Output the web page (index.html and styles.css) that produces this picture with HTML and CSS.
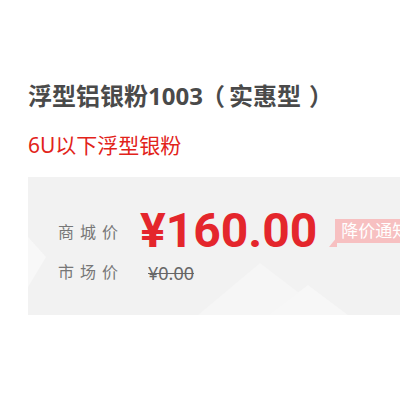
FILE: index.html
```html
<!DOCTYPE html>
<html lang="zh-CN">
  <head>
    <meta charset="UTF-8" />
    <meta name="viewport" content="width=device-width, initial-scale=1.0" />
    <title>浮型铝银粉1003（实惠型）</title>
    <link rel="stylesheet" href="styles.css">
  </head>
  <body>
    <div class="product">
      <h1 class="name">浮型铝银粉1003<span class="paren-l">（</span>实惠型<span class="paren-r">）</span></h1>
      <p class="sub">6U以下浮型银粉</p>

      <!-- 价格区 -->
      <div class="price-box">
        <div class="row">
          <span class="label">商城价</span>
          <span class="price">¥160.00</span>
          <span class="notice">降价通知</span>
        </div>
        <div class="row row-market">
          <span class="label">市场价</span>
          <del class="old">¥0.00</del>
        </div>
      </div>
    </div>
  </body>
</html>
```

FILE: styles.css
```css
body {
  margin: 0;
  background: #fff;
  font-family: "Noto Sans", "Noto Sans CJK SC", sans-serif;
  overflow: hidden;
}

.product {
  padding: 80px 0 0 28px;
}

.name {
  margin: 0;
  font-size: 24px;
  line-height: 32px;
  font-weight: bold;
  color: #4a4a4a;
  white-space: nowrap;
}

.paren-l {
  margin: 0 4px 0 -2px;
}

.paren-r {
  margin-left: 8px;
}

.sub {
  margin: 20px 0 0;
  font-size: 21px;
  line-height: 26px;
  color: #e2231a;
}

.price-box {
  margin-top: 19px;
  height: 138px;
  padding: 30px 0 0 30px;
  box-sizing: border-box;
  background-color: #f2f2f2;
  background-image: url("data:image/svg+xml,%3Csvg xmlns='http://www.w3.org/2000/svg' width='372' height='138'%3E%3Cpolygon points='0,60 18,80 0,110' fill='%23f8f8f8'/%3E%3Cpolygon points='170,138 232,86 300,138' fill='%23f6f6f6'/%3E%3Cpolygon points='240,138 280,108 320,138' fill='%23f7f7f7'/%3E%3C/svg%3E");
  background-repeat: no-repeat;
  white-space: nowrap;
}

.row {
  display: flex;
  align-items: center;
}

.row-market {
  margin-top: 2px;
}

.label {
  flex: none;
  width: 82px;
  font-size: 16px;
  letter-spacing: 6px;
  color: #777;
}

.price {
  flex: none;
  font-family: Roboto, "Noto Sans", sans-serif;
  font-size: 48px;
  line-height: 48px;
  font-weight: bold;
  color: #e4262c;
}

.notice {
  flex: none;
  position: relative;
  margin-left: 18px;
  padding: 0 6px;
  height: 24px;
  line-height: 24px;
  font-size: 17px;
  color: #fff;
  background: #f7c0c1;
}

.notice::before {
  content: "";
  position: absolute;
  left: -6px;
  bottom: -4px;
  border-top: 10px solid transparent;
  border-right: 8px solid #f7c0c1;
}

.old {
  flex: none;
  margin: 4px 0 0 8px;
  font-size: 18px;
  color: #666;
}
```
